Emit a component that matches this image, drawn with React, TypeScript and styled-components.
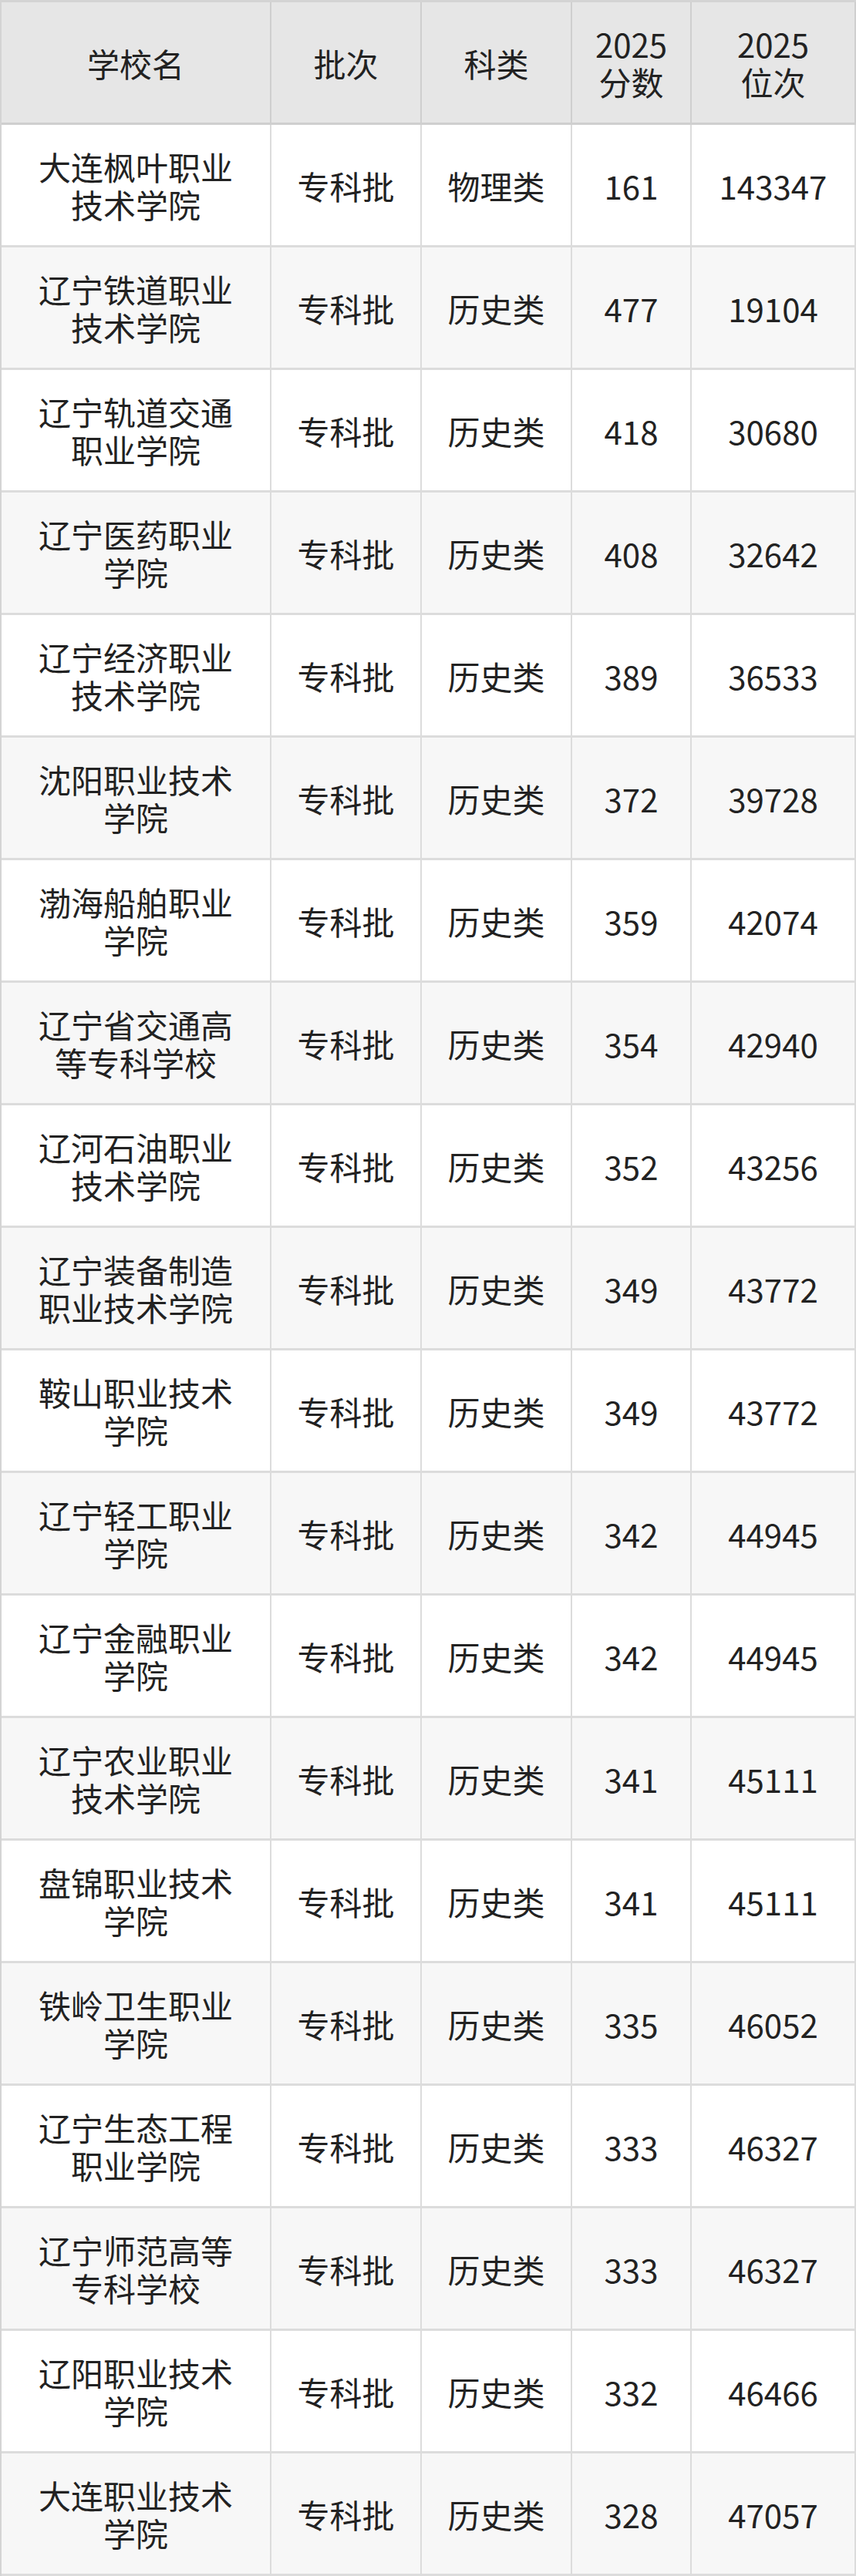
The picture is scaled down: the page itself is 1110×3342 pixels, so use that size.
import styled, { createGlobalStyle } from "styled-components";

const GlobalStyle = createGlobalStyle`
  html, body {
    margin: 0;
    padding: 0;
    background: #ffffff;
  }
  body {
    font-family: "Noto Sans CJK SC", "Noto Sans", sans-serif;
    color: #222222;
  }
`;

const Table = styled.div`
  width: 1110px;
  border-top: 3px solid #d4d4d4;
  border-left: 2px solid #d4d4d4;
  box-sizing: border-box;
`;

const Row = styled.div<{ $head?: boolean; $alt?: boolean }>`
  display: grid;
  grid-template-columns: 350px 195px 195px 155px 213px;
  height: 159px;
  box-sizing: border-box;
  border-bottom: 3px solid ${(p) => (p.$head ? "#cfcfcf" : "#dcdcdc")};
  background-color: ${(p) => (p.$head ? "#e6e6e6" : p.$alt ? "#f7f7f7" : "#ffffff")};
`;

const Cell = styled.div<{ $head?: boolean; $pad?: number }>`
  display: flex;
  align-items: center;
  justify-content: center;
  text-align: center;
  box-sizing: border-box;
  padding: 0 ${(p) => p.$pad ?? 10}px;
  border-right: 2px solid ${(p) => (p.$head ? "#cfcfcf" : "#dcdcdc")};
  font-size: 42px;
  line-height: 49px;
  word-break: break-all;
`;

interface School {
  name: string;
  batch: string;
  kind: string;
  score: number;
  rank: number;
}

const schools: School[] = [
  { name: "大连枫叶职业技术学院", batch: "专科批", kind: "物理类", score: 161, rank: 143347 },
  { name: "辽宁铁道职业技术学院", batch: "专科批", kind: "历史类", score: 477, rank: 19104 },
  { name: "辽宁轨道交通职业学院", batch: "专科批", kind: "历史类", score: 418, rank: 30680 },
  { name: "辽宁医药职业学院", batch: "专科批", kind: "历史类", score: 408, rank: 32642 },
  { name: "辽宁经济职业技术学院", batch: "专科批", kind: "历史类", score: 389, rank: 36533 },
  { name: "沈阳职业技术学院", batch: "专科批", kind: "历史类", score: 372, rank: 39728 },
  { name: "渤海船舶职业学院", batch: "专科批", kind: "历史类", score: 359, rank: 42074 },
  { name: "辽宁省交通高等专科学校", batch: "专科批", kind: "历史类", score: 354, rank: 42940 },
  { name: "辽河石油职业技术学院", batch: "专科批", kind: "历史类", score: 352, rank: 43256 },
  { name: "辽宁装备制造职业技术学院", batch: "专科批", kind: "历史类", score: 349, rank: 43772 },
  { name: "鞍山职业技术学院", batch: "专科批", kind: "历史类", score: 349, rank: 43772 },
  { name: "辽宁轻工职业学院", batch: "专科批", kind: "历史类", score: 342, rank: 44945 },
  { name: "辽宁金融职业学院", batch: "专科批", kind: "历史类", score: 342, rank: 44945 },
  { name: "辽宁农业职业技术学院", batch: "专科批", kind: "历史类", score: 341, rank: 45111 },
  { name: "盘锦职业技术学院", batch: "专科批", kind: "历史类", score: 341, rank: 45111 },
  { name: "铁岭卫生职业学院", batch: "专科批", kind: "历史类", score: 335, rank: 46052 },
  { name: "辽宁生态工程职业学院", batch: "专科批", kind: "历史类", score: 333, rank: 46327 },
  { name: "辽宁师范高等专科学校", batch: "专科批", kind: "历史类", score: 333, rank: 46327 },
  { name: "辽阳职业技术学院", batch: "专科批", kind: "历史类", score: 332, rank: 46466 },
  { name: "大连职业技术学院", batch: "专科批", kind: "历史类", score: 328, rank: 47057 },
];

function App() {
  return (
    <>
      <GlobalStyle />
      <Table>
        <Row $head>
          <Cell $head>学校名</Cell>
          <Cell $head>批次</Cell>
          <Cell $head>科类</Cell>
          <Cell $head>2025<br />分数</Cell>
          <Cell $head>2025<br />位次</Cell>
        </Row>
        {schools.map((s, i) => (
          <Row key={s.name} $alt={i % 2 === 1}>
            <Cell $pad={46}>{s.name}</Cell>
            <Cell>{s.batch}</Cell>
            <Cell>{s.kind}</Cell>
            <Cell>{s.score}</Cell>
            <Cell>{s.rank}</Cell>
          </Row>
        ))}
      </Table>
    </>
  );
}

export default App;
